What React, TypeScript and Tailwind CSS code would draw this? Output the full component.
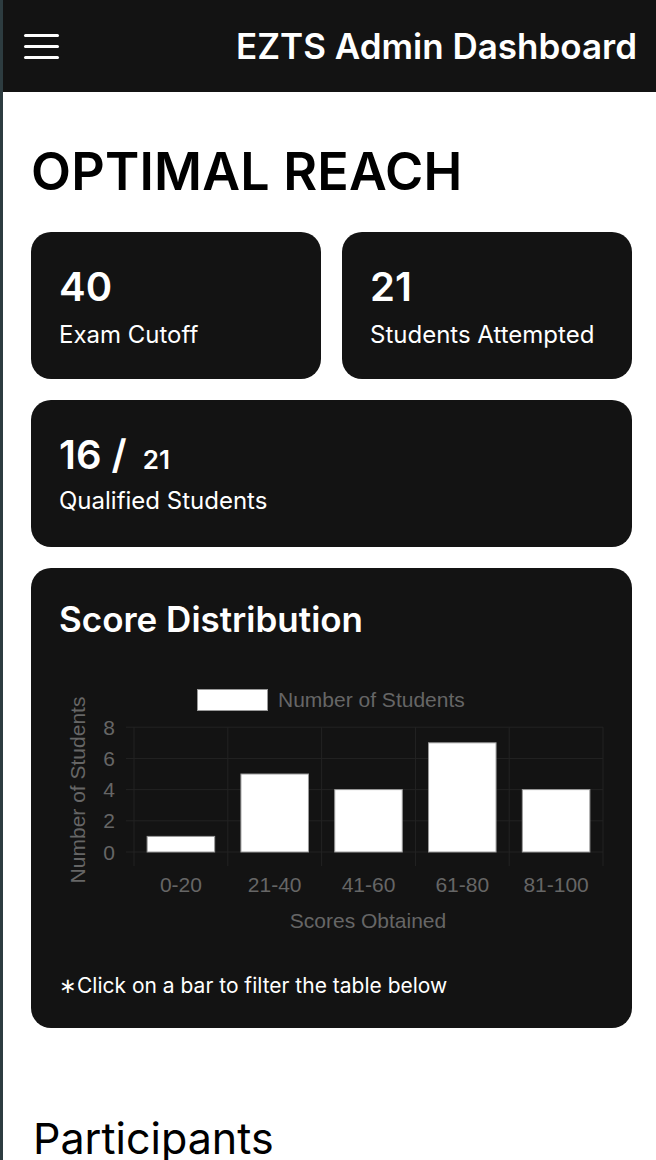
import React from "react";

const bars = [
  { label: "0-20", v: 1 },
  { label: "21-40", v: 5 },
  { label: "41-60", v: 4 },
  { label: "61-80", v: 7 },
  { label: "81-100", v: 4 },
];

function Chart() {
  const x0 = 103;
  const x1 = 572;
  const cw = (x1 - x0) / 5;
  const yZero = 215;
  const unit = 15.6;
  const ticks = [0, 2, 4, 6, 8];
  const font = "'Liberation Sans', Arial, sans-serif";
  return (
    <svg width="601" height="338" viewBox="0 0 601 338" className="block">
      {ticks.map((t) => (
        <line key={"h" + t} x1={x0 - 8} x2={x1} y1={yZero - t * unit} y2={yZero - t * unit} stroke="#232323" strokeWidth="1" />
      ))}
      {Array.from({ length: 6 }).map((_, i) => (
        <line key={"v" + i} x1={x0 + i * cw} x2={x0 + i * cw} y1={yZero - 8 * unit} y2={yZero + 14} stroke="#232323" strokeWidth="1" />
      ))}
      <rect x="166.5" y="52.5" width="70" height="21" fill="#ffffff" stroke="#9a9a9a" strokeWidth="1" />
      <text x="247" y="70" fill="#666666" fontSize="21" fontFamily={font}>Number of Students</text>
      {ticks.map((t) => (
        <text key={"t" + t} x="84" y={yZero - t * unit} fill="#666666" fontSize="21" fontFamily={font} textAnchor="end" dominantBaseline="central">{t}</text>
      ))}
      {bars.map((b, i) => {
        const bw = cw * 0.72;
        const cx = x0 + cw * i + cw / 2;
        const h = b.v * unit;
        return (
          <g key={b.label}>
            <rect x={cx - bw / 2} y={yZero - h} width={bw} height={h} fill="#ffffff" stroke="#9a9a9a" strokeWidth="1" />
            <text x={cx} y="247" fill="#666666" fontSize="21" fontFamily={font} textAnchor="middle" dominantBaseline="central">{b.label}</text>
          </g>
        );
      })}
      <text x="337" y="283" fill="#666666" fontSize="21" fontFamily={font} textAnchor="middle" dominantBaseline="central">Scores Obtained</text>
      <text x="0" y="0" transform="translate(46 153) rotate(-90)" fill="#666666" fontSize="21" fontFamily={font} textAnchor="middle" dominantBaseline="central">Number of Students</text>
    </svg>
  );
}

export default function App() {
  return (
    <div className="min-h-[1160px] bg-white border-l-[3px] border-[#2d3c40] font-['Inter','Noto_Sans',sans-serif]">
      <header className="h-[92px] bg-[#131313] flex items-center justify-between pl-[21px] pr-[19px]">
        <div className="flex flex-col gap-[8px] w-[35px]">
          <span className="block h-[3px] bg-white rounded-full" />
          <span className="block h-[3px] bg-white rounded-full" />
          <span className="block h-[3px] bg-white rounded-full" />
        </div>
        <h1 className="font-semibold text-white text-[35px] leading-none">EZTS Admin Dashboard</h1>
      </header>
      <main className="pl-[28px] pr-[24px] pt-[54px]">
        <h2 className="text-[52px] leading-none font-semibold text-black tracking-[0.2px]">OPTIMAL REACH</h2>
        <div className="mt-[34px] grid grid-cols-2 gap-[21px]">
          <div className="bg-[#131313] rounded-[20px] h-[147px] pl-[28px] pt-[35px] text-white">
            <div className="text-[40px] leading-none font-semibold">40</div>
            <div className="mt-[16px] text-[24px] leading-none">Exam Cutoff</div>
          </div>
          <div className="bg-[#131313] rounded-[20px] h-[147px] pl-[28px] pt-[35px] text-white">
            <div className="text-[40px] leading-none font-semibold">21</div>
            <div className="mt-[16px] text-[24px] leading-none">Students Attempted</div>
          </div>
        </div>
        <div className="mt-[21px] bg-[#131313] rounded-[20px] h-[147px] pl-[28px] pt-[35px] text-white">
          <div className="leading-none font-semibold flex items-baseline">
            <span className="text-[40px]">16 /</span>
            <span className="text-[26px] ml-[16px]">21</span>
          </div>
          <div className="mt-[14px] text-[24px] leading-none">Qualified Students</div>
        </div>
        <div className="mt-[21px] bg-[#131313] rounded-[20px] pt-[34px] pb-[32px] text-white">
          <div className="pl-[28px] text-[35px] leading-none font-semibold">Score Distribution</div>
          <Chart />
          <div className="pl-[28px] text-[21px] leading-none">∗Click on a bar to filter the table below</div>
        </div>
        <h2 className="mt-[89px] text-[43px] leading-none text-black pl-[2px]">Participants</h2>
      </main>
    </div>
  );
}
